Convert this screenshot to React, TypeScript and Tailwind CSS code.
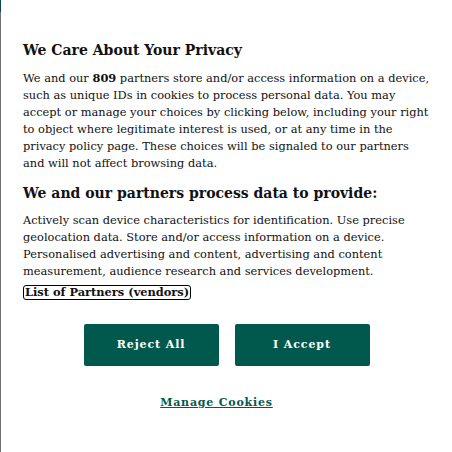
export default function App() {
  return (
    <div className="flex h-[452px] w-[452px] overflow-hidden bg-white font-['DejaVu_Serif',serif] text-[#111]">
      {/* left edge of the page behind the dialog */}
      <div className="flex w-px flex-col">
        <div className="h-3 bg-[#0b4a40]" />
        <div className="flex-1 bg-[#6e6e6e]" />
      </div>

      <div className="flex flex-1 flex-col px-[22px] pt-[41px]">
        <h2 className="text-[14px] font-bold leading-[18px]">We Care About Your Privacy</h2>
        <p className="mt-[11px] text-[11.4px] leading-[17px]">
          We and our <b>809</b> partners store and/or access information on a device, such as unique IDs in cookies to
          process personal data. You may accept or manage your choices by clicking below, including your right to object
          where legitimate interest is used, or at any time in the privacy policy page. These choices will be signaled to
          our partners and will not affect browsing data.
        </p>

        <h3 className="mt-[12px] text-[14px] font-bold leading-[18px]">We and our partners process data to provide:</h3>
        <p className="mt-[10px] text-[11.4px] leading-[17px]">
          Actively scan device characteristics for identification. Use precise geolocation data. Store and/or access
          information on a device. Personalised advertising and content, advertising and content measurement, audience
          research and services development.
        </p>
        <div className="mt-[5px] flex">
          <a className="rounded-[3px] border border-black px-px text-[11.4px] font-bold leading-[13px]">
            List of Partners (vendors)
          </a>
        </div>

        <div className="mt-[24px] flex justify-center gap-4">
          <button className="h-[42px] w-[135px] rounded-[2px] bg-[#00594c] text-[11px] font-bold tracking-[0.9px] text-white">
            Reject All
          </button>
          <button className="h-[42px] w-[135px] rounded-[2px] bg-[#00594c] text-[11px] font-bold tracking-[0.9px] text-white">
            I Accept
          </button>
        </div>

        <div className="mt-[29px] flex justify-center pr-[20px]">
          <a className="text-[11px] font-bold tracking-[0.8px] text-[#00594c] underline">Manage Cookies</a>
        </div>
      </div>
    </div>
  )
}
